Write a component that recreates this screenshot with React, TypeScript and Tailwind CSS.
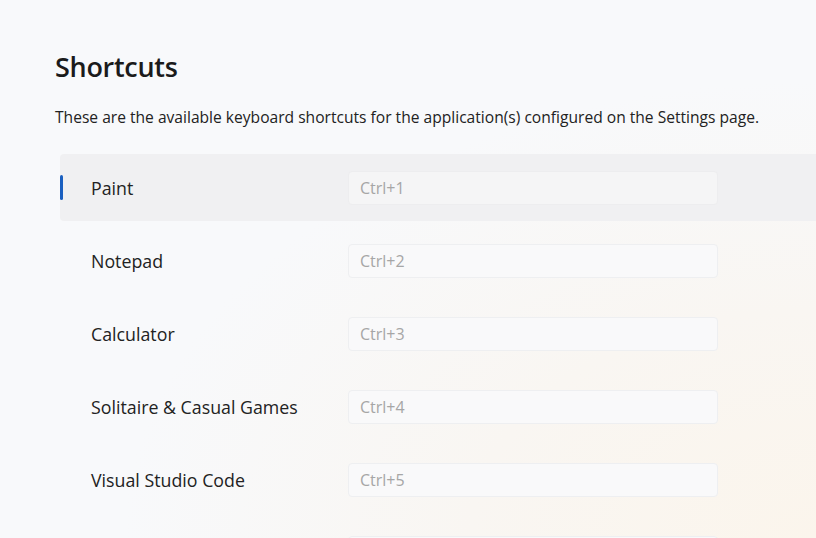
import React from 'react';

const shortcuts = [
  { name: 'Paint', keys: 'Ctrl+1' },
  { name: 'Notepad', keys: 'Ctrl+2' },
  { name: 'Calculator', keys: 'Ctrl+3' },
  { name: 'Solitaire & Casual Games', keys: 'Ctrl+4' },
  { name: 'Visual Studio Code', keys: 'Ctrl+5' },
  { name: 'File Explorer', keys: 'Ctrl+6' },
];

export default function App() {
  const selected = 0;

  return (
    <div
      className="h-[538px] w-[816px] overflow-hidden bg-[#f8f9fb] bg-[radial-gradient(ellipse_at_100%_100%,#fbf5ec_0%,#f9f6f2_30%,#f8f9fb_60%)] text-[#1b1b1b]"
      style={{ fontFamily: '"Open Sans", "Noto Sans", sans-serif' }}
    >
      <div className="pl-[55px] pt-[47px]">
        <h1 className="text-[27px] font-semibold leading-[40px] tracking-[-0.3px]">Shortcuts</h1>
        <p className="mt-[19px] text-[15.6px] leading-[22px] text-[#222]">
          These are the available keyboard shortcuts for the application(s) configured on the Settings page.
        </p>
      </div>

      <ul className="mt-[26px] ml-[60px] flex flex-col gap-[6px]">
        {shortcuts.map((s, i) => (
          <li
            key={s.name}
            className={`relative flex h-[67px] items-center pl-[31px] ${
              i === selected ? 'rounded-l-[4px] bg-[#f0f0f2]' : ''
            }`}
          >
            {i === selected && (
              <span className="absolute left-0 top-[21px] h-[25px] w-[3px] rounded-full bg-[#1a5fc0]" />
            )}
            <span className="mt-[2px] w-[257px] text-[17.8px] text-[#222]">{s.name}</span>
            <div
              className={`flex h-[34px] w-[370px] items-center rounded-[4px] border px-[11px] text-[16px] text-[#a6a6a6] ${
                i === selected ? 'border-[#ededef] bg-[#f5f5f6]' : 'border-[#eeeff1] bg-[#f9f9fa]'
              }`}
            >
              {s.keys}
            </div>
          </li>
        ))}
      </ul>
    </div>
  );
}
